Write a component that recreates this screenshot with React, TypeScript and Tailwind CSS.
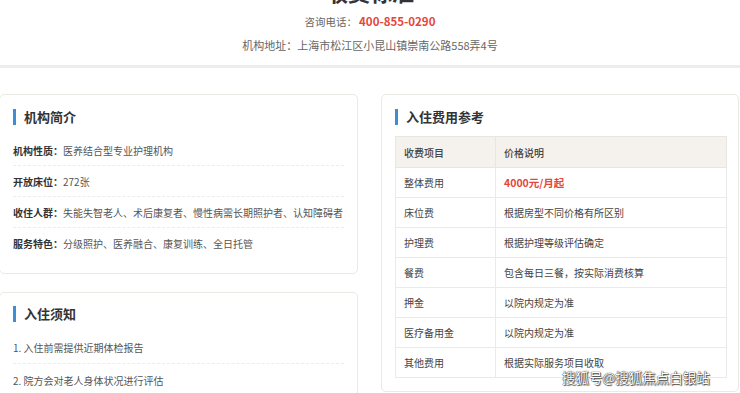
const font = { fontFamily: '"Microsoft YaHei", "Noto Sans CJK SC", "Noto Sans", sans-serif' };

const intro = [
  { label: "机构性质", value: "医养结合型专业护理机构" },
  { label: "开放床位", value: "272张" },
  { label: "收住人群", value: "失能失智老人、术后康复者、慢性病需长期照护者、认知障碍者" },
  { label: "服务特色", value: "分级照护、医养融合、康复训练、全日托管" },
];

const notices = ["1. 入住前需提供近期体检报告", "2. 院方会对老人身体状况进行评估"];

const fees = [
  { item: "整体费用", price: "4000元/月起", hot: true },
  { item: "床位费", price: "根据房型不同价格有所区别" },
  { item: "护理费", price: "根据护理等级评估确定" },
  { item: "餐费", price: "包含每日三餐，按实际消费核算" },
  { item: "押金", price: "以院内规定为准" },
  { item: "医疗备用金", price: "以院内规定为准" },
  { item: "其他费用", price: "根据实际服务项目收取" },
];

function CardTitle({ children }: { children: string }) {
  return (
    <div className="flex h-[22px] items-center gap-2">
      <span className="h-4 w-[3px] bg-[#3b8fd9]" />
      <h2 className="text-[13px] font-bold leading-[22px] text-[#333]">{children}</h2>
    </div>
  );
}

export default function App() {
  return (
    <div className="relative h-[393px] w-[740px] overflow-hidden bg-white" style={font}>
      <header className="flex flex-col items-center">
        <div className="mt-[-20px] text-[22px] font-bold leading-[22px] text-[#333]">收费标准</div>
        <div className="mt-[9px] flex items-baseline text-[10.5px] leading-5 text-[#666]">
          咨询电话：<span className="ml-[2px] text-[11.5px] font-bold text-[#e5463a]">400-855-0290</span>
        </div>
        <div className="mt-[3px] text-[11px] leading-5 text-[#666]">
          机构地址：上海市松江区小昆山镇崇南公路558弄4号
        </div>
      </header>
      <div className="mt-[10px] h-[3px] bg-[#eeede9]" />

      <main className="mt-[26px] flex gap-[23px]">
        <div className="ml-[-1px] flex w-[359px] flex-col gap-[18px]">
          <section className="rounded-[5px] border border-[#eae9e4] px-[13px] pb-[14px] pt-[11px]">
            <CardTitle>机构简介</CardTitle>
            <div className="mt-[7px]">
              {intro.map((r, i) => (
                <div
                  key={r.label}
                  className={`flex h-[31px] items-center whitespace-nowrap text-[10px] ${i < intro.length - 1 ? "border-b border-dashed border-[#ececec]" : ""}`}
                >
                  <span className="font-bold text-[#333]">{r.label}：</span>
                  <span className="text-[#555]">{r.value}</span>
                </div>
              ))}
            </div>
          </section>

          <section className="rounded-[5px] border border-[#eae9e4] px-[13px] pb-3 pt-[10px]">
            <CardTitle>入住须知</CardTitle>
            <div className="mt-[7px]">
              {notices.map((n, i) => (
                <div
                  key={n}
                  className={`flex h-[32px] items-center text-[10px] text-[#555] ${i < notices.length - 1 ? "border-b border-dashed border-[#ececec]" : ""}`}
                >
                  {n}
                </div>
              ))}
            </div>
          </section>
        </div>

        <section className="h-[298px] w-[358px] rounded-[5px] border border-[#eae9e4] pl-[13px] pr-[11px] pt-[11px]">
          <CardTitle>入住费用参考</CardTitle>
          <table className="mt-2 w-full border-collapse text-[10px]">
            <thead>
              <tr className="h-[31px] bg-[#f5f2ee] text-left">
                <th className="w-[100px] border border-[#e8e6e2] pl-2 font-medium text-[#444]">收费项目</th>
                <th className="border border-[#e8e6e2] pl-2 font-medium text-[#444]">价格说明</th>
              </tr>
            </thead>
            <tbody>
              {fees.map((f) => (
                <tr key={f.item} className="h-[30px]">
                  <td className="border border-[#eaeaea] pl-2 text-[#444]">{f.item}</td>
                  <td
                    className={`border border-[#eaeaea] pl-2 ${f.hot ? "text-[10.5px] font-bold text-[#e5463a]" : "text-[#444]"}`}
                  >
                    {f.price}
                  </td>
                </tr>
              ))}
            </tbody>
          </table>
        </section>
      </main>

      <div
        className="absolute left-[562px] top-[367px] whitespace-nowrap text-[13.5px] leading-5 text-white"
        style={{ textShadow: "0 0 1px #333, 0 0 1px #333, 1px 1px 1px #555" }}
      >
        搜狐号@搜狐焦点白银站
      </div>
    </div>
  );
}
